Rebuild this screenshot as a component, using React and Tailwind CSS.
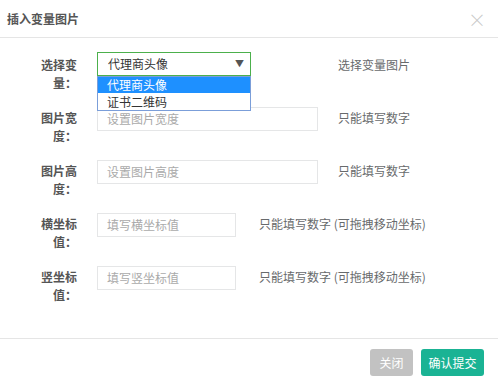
import React from 'react';

const font = { fontFamily: '"Noto Sans CJK SC", "Liberation Sans", sans-serif' };

const rows = [
  { label: '选择变量：', select: true, help: '选择变量图片', wide: true },
  { label: '图片宽度：', placeholder: '设置图片宽度', help: '只能填写数字', wide: true },
  { label: '图片高度：', placeholder: '设置图片高度', help: '只能填写数字', wide: true },
  { label: '横坐标值：', placeholder: '填写横坐标值', help: '只能填写数字 (可拖拽移动坐标)', wide: false },
  { label: '竖坐标值：', placeholder: '填写竖坐标值', help: '只能填写数字 (可拖拽移动坐标)', wide: false },
];

function SelectBox() {
  return (
    <div className="relative w-[154px]">
      <div className="h-[24px] border border-[#4cb04c] flex items-center pl-[10px] pr-[6px] text-[12px] text-[#333]">
        <span className="flex-1">代理商头像</span>
        <span className="text-[9px] text-[#555]">▼</span>
      </div>
      <div className="absolute left-0 top-[24px] w-[154px] z-10 bg-white border border-[#7b9ed9] text-[12px] leading-[16px]">
        <div className="bg-[#1e90ff] text-white pl-[9px] h-[16px]">代理商头像</div>
        <div className="text-[#333] pl-[9px] h-[17px] pt-[1px]">证书二维码</div>
      </div>
    </div>
  );
}

export default function App() {
  return (
    <div className="w-[498px] h-[385px] bg-white flex flex-col" style={font}>
      {/* Header */}
      <div className="h-[38px] border-b border-[#e5e5e5] flex items-center justify-between pl-[7px] pr-[12px]">
        <span className="text-[12px] font-bold text-[#555]">插入变量图片</span>
        <span className="text-[18px] leading-none text-[#c8c8c8] font-light">×</span>
      </div>

      {/* Body */}
      <div className="flex-1 pt-[14px] flex flex-col gap-[29px]">
        {rows.map((r) => (
          <div key={r.label} className="flex items-start pl-[38px] h-[24px]">
            <div className="w-[39px] text-right text-[12px] leading-[18px] font-bold text-[#555] break-all pt-[4px]">
              {r.label}
            </div>
            <div className="ml-[20px]">
              {r.select ? (
                <SelectBox />
              ) : (
                <input
                  placeholder={r.placeholder}
                  className={`${r.wide ? 'w-[221px]' : 'w-[139px]'} h-[24px] border border-[#e5e6e7] px-[9px] text-[12px] placeholder-[#aaa] outline-none`}
                  style={font}
                />
              )}
            </div>
            <div
              className={`${r.wide ? (r.select ? 'ml-[87px]' : 'ml-[20px]') : 'ml-[23px]'} text-[12px] text-[#676a6c] pt-[4px]`}
            >
              {r.help}
            </div>
          </div>
        ))}
      </div>

      {/* Footer */}
      <div className="h-[47px] border-t border-[#e5e5e5] flex items-center justify-end gap-[8px] pr-[14px] pt-[1px]">
        <button className="w-[43px] h-[27px] rounded-[3px] bg-[#c2c2c2] text-white text-[12px]">关闭</button>
        <button className="w-[63px] h-[27px] rounded-[3px] bg-[#1ab394] text-white text-[12px]">确认提交</button>
      </div>
    </div>
  );
}
